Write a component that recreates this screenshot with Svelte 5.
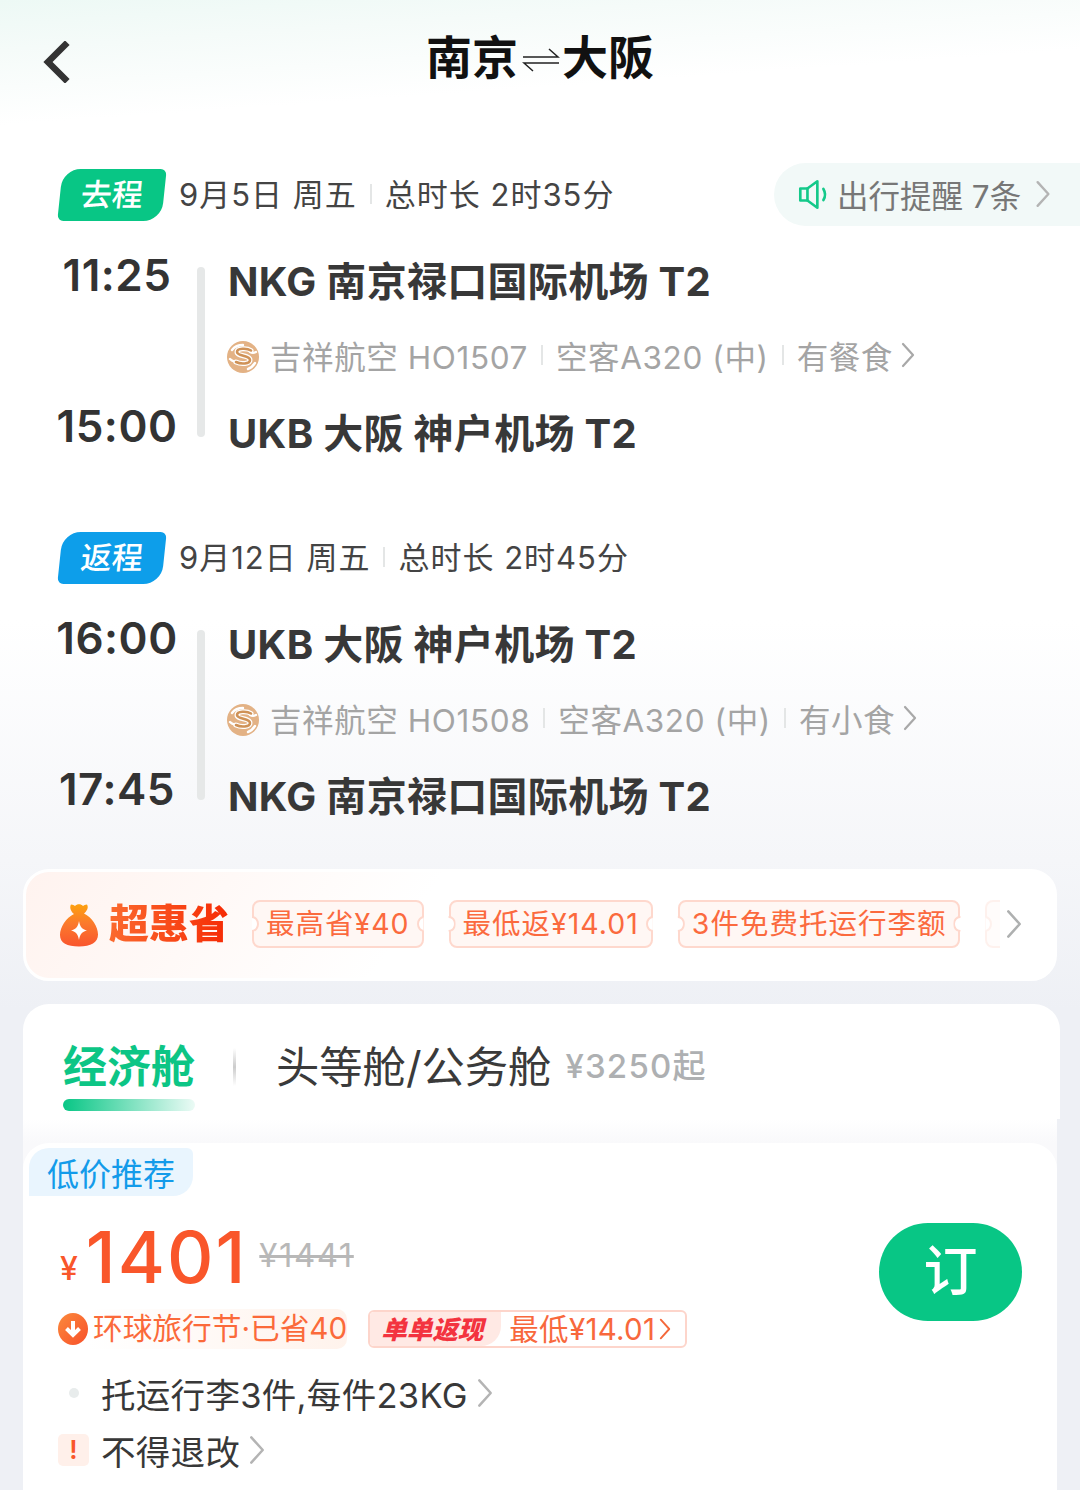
<script lang="ts">
	const legs = [
		{
			tag: '去程', tone: 'green', date: '9月5日 周五', total: '总时长 2时35分', reminder: true,
			depTime: '11:25', arrTime: '15:00',
			dep: 'NKG 南京禄口国际机场 T2', arr: 'UKB 大阪 神户机场 T2',
			flight: '吉祥航空 HO1507', plane: '空客A320 (中)', meal: '有餐食'
		},
		{
			tag: '返程', tone: 'blue', date: '9月12日 周五', total: '总时长 2时45分', reminder: false,
			depTime: '16:00', arrTime: '17:45',
			dep: 'UKB 大阪 神户机场 T2', arr: 'NKG 南京禄口国际机场 T2',
			flight: '吉祥航空 HO1508', plane: '空客A320 (中)', meal: '有小食'
		}
	];

	const perks = ['最高省¥40', '最低返¥14.01', '3件免费托运行李额'];
</script>

{#snippet chevron(w: number, h: number, color: string)}
	<svg class="chev" width={w} height={h} viewBox="0 0 14 26" fill="none">
		<path d="M2 2l10 11L2 24" stroke={color} stroke-width="2.2" stroke-linecap="round" stroke-linejoin="round" />
	</svg>
{/snippet}

<div class="page">
	<header class="nav">
		<svg class="back" width="28" height="42" viewBox="0 0 28 42" fill="none">
			<path d="M23 4L6 21l17 17" stroke="#333" stroke-width="6.500" stroke-linecap="square" />
		</svg>
		<h1 class="title">
			南京
			<svg width="38" height="24" viewBox="0 0 38 24" fill="none">
				<path d="M1 9h35L27 1M37 15H2l9 8" stroke="#222" stroke-width="1.5" />
			</svg>
			大阪
		</h1>
	</header>

	{#each legs as leg}
		<section class="leg">
			<div class="leg-head">
				<span class="tag {leg.tone}">{leg.tag}</span>
				<span class="date">{leg.date}</span>
				<i class="tick"></i>
				<span class="date">{leg.total}</span>
				{#if leg.reminder}
					<div class="reminder">
						<svg width="33" height="33" viewBox="0 0 30 30" fill="none">
							<path d="M3 9.5h6.5L18.5 3v24l-9-6.500H3z" stroke="#14c98a" stroke-width="2.400" stroke-linejoin="round" />
							<path d="M9.500 9.500v11M24 10c1.800 3 1.800 7 0 10" stroke="#14c98a" stroke-width="2.400" stroke-linecap="round" />
						</svg>
						<span>出行提醒 7条</span>
						{@render chevron(16, 28, '#b4b4b4')}
					</div>
				{/if}
			</div>

			<div class="leg-body">
				<div class="times">
					<span>{leg.depTime}</span>
					<span>{leg.arrTime}</span>
				</div>
				<i class="rail"></i>
				<div class="route">
					<div class="airport">{leg.dep}</div>
					<div class="flight">
						<svg class="logo" width="34" height="34" viewBox="0 0 34 34">
							<circle cx="17" cy="17" r="16" fill="#e3b285" />
							<path d="M6 10c3-4 7-5 11-5M22 29c3-1 5-3 7-6M4 19c2 2 3 2 6 3M24 12c2 1 4 1 6 0" fill="none" stroke="#fff" stroke-width="2.400" stroke-linecap="round" />
							<path d="M25 10.500c-4-2.500-14-2.500-14 1.500 0 4.500 13 3 13 8 0 4-9 4.500-14 2" fill="none" stroke="#fff" stroke-width="5" stroke-linecap="round" />
							<path d="M25 10.500c-4-2.500-14-2.500-14 1.500 0 4.500 13 3 13 8 0 4-9 4.500-14 2" fill="none" stroke="#cf9257" stroke-width="2.600" stroke-linecap="round" />
						</svg>
						<span>{leg.flight}</span>
						<i class="tick"></i>
						<span>{leg.plane}</span>
						<i class="tick"></i>
						<span>{leg.meal}</span>
						{@render chevron(14, 26, '#a8a8a8')}
					</div>
					<div class="airport">{leg.arr}</div>
				</div>
			</div>
		</section>
	{/each}

	<section class="deals">
		<svg class="bag" width="38" height="44" viewBox="0 0 38 44">
			<defs>
				<linearGradient id="bagFill" x1="0.500" y1="0" x2="0.500" y2="1">
					<stop offset="0" stop-color="#fda20e" />
					<stop offset="0.450" stop-color="#fb7a2c" />
					<stop offset="1" stop-color="#f9552e" />
				</linearGradient>
			</defs>
			<path d="M11 1.500c2 0 3 1 4 1.500 2-2.500 6-2.500 8 0 1-.5 2-1.500 4-1.500 2 3-.5 7-3 9 8 4 14 13 14 21 0 8-7 12-19 12S0 40 0 32c0-8 6-17 14-21-2.500-2-5-6-3-9.500z" fill="url(#bagFill)" />
			<path d="M19 18c1 6 3 8 8 9.500-5 1.500-7 3.500-8 9.500-1-6-3-8-8-9.500 5-1.500 7-3.500 8-9.500z" fill="#fff" />
		</svg>
		<span class="brand">超惠省</span>
		<div class="perks">
			{#each perks as perk}
				<span class="ticket">{perk}</span>
			{/each}
			<span class="ticket ghost"></span>
		</div>
		{@render chevron(16, 30, '#aeb0b0')}
	</section>

	<section class="cabin-tabs">
		<div class="tab-on">
			<span>经济舱</span>
			<i class="tab-line"></i>
		</div>
		<i class="tab-sep"></i>
		<span class="tab-off">头等舱/公务舱</span>
		<span class="tab-price">¥3250起</span>
	</section>

	<section class="fare-wrap">
		<div class="fare">
			<span class="low-tag">低价推荐</span>
			<div class="fare-main">
				<div class="fare-info">
					<div class="price-row">
						<span class="yen">¥</span>
						<span class="price">1401</span>
						<s class="old-price">¥1441</s>
					</div>
					<div class="promo-row">
						<span class="festival">
							<svg width="30" height="32" viewBox="0 0 30 32">
								<defs>
									<linearGradient id="dropFill" x1="0" y1="0" x2="1" y2="1">
										<stop offset="0" stop-color="#fb8a3c" />
										<stop offset="1" stop-color="#f8502a" />
									</linearGradient>
								</defs>
								<ellipse cx="15" cy="16" rx="15" ry="16" fill="url(#dropFill)" />
								<path d="M15 8v14M8.500 15.500L15 22l6.500-6.500" fill="none" stroke="#fff" stroke-width="4" />
							</svg>
							<span class="festival-text">环球旅行节·已省40</span>
						</span>
						<span class="cashback">
							<b>单单返现</b>
							<span class="cash-text">最低¥14.01</span>
							{@render chevron(12, 22, '#f4683a')}
						</span>
					</div>
				</div>
				<button type="button" class="book">订</button>
			</div>
			<div class="note">
				<span class="note-icon"><i class="dot"></i></span>
				<span>托运行李3件,每件23KG</span>
				{@render chevron(16, 30, '#b4b4b4')}
			</div>
			<div class="note">
				<span class="note-icon warn">!</span>
				<span>不得退改</span>
				{@render chevron(16, 30, '#b4b4b4')}
			</div>
		</div>
	</section>
</div>

<style>
	:global(body) {
		margin: 0;
	}

	.page {
		height: 1490px;
		overflow: hidden;
		box-sizing: border-box;
		font-family: Inter, "Noto Sans CJK SC", sans-serif;
		color: #333;
		background:
			linear-gradient(176deg, #edf9f5 0, #f5fbf9 50px, rgba(255, 255, 255, 0) 125px),
			linear-gradient(180deg, #fff 0, #fff 620px, #f5f6f9 860px, #eef0f5 1010px, #eef0f5 100%);
	}

	.chev {
		flex: none;
	}

	.tick {
		flex: none;
		width: 2px;
		height: 20px;
		background: #e4e6e6;
	}

	.nav {
		display: flex;
		align-items: center;
		justify-content: center;
		position: relative;
		height: 117px;
	}

	.back {
		position: absolute;
		left: 42px;
		top: 41px;
	}

	.title {
		display: flex;
		align-items: center;
		margin: -4px 0 0;
		font-size: 46px;
		font-weight: 700;
		color: #111;
		line-height: 1;
	}

	.title svg {
		margin: 6px 2px 0 4px;
	}

	.leg {
		padding-left: 58px;
		height: 363px;
	}

	.leg + .leg {
		height: 344px;
	}

	.leg-head {
		display: flex;
		align-items: center;
		gap: 13px;
		height: 64px;
		margin-top: 45px;
	}

	.leg + .leg .leg-head {
		margin-top: 0;
	}

	.tag {
		flex: none;
		width: 104px;
		height: 52px;
		box-sizing: border-box;
		padding-bottom: 6px;
		margin: 2px 2px 0 2px;
		display: flex;
		align-items: center;
		justify-content: center;
		font-size: 31px;
		font-weight: 500;
		color: #fff;
		border-radius: 18px 6px 18px 6px;
		transform: skewX(-6deg);
	}

	.tag.green {
		background: #08c685;
	}

	.tag.blue {
		background: #0d9eea;
	}

	.date {
		margin-bottom: 3px;
		font-size: 31px;
		color: #444;
		letter-spacing: 1px;
		white-space: nowrap;
	}

	.reminder {
		display: flex;
		align-items: center;
		gap: 7px;
		margin-left: auto;
		height: 63px;
		width: 306px;
		box-sizing: border-box;
		padding-left: 23px;
		background: #f2f9f8;
		border-radius: 32px 0 0 32px;
		font-size: 31.500px;
		color: #777;
		white-space: nowrap;
	}

	.reminder .chev {
		margin-left: 7px;
	}

	.leg-body {
		display: flex;
		margin-top: 20px;
	}

	.times {
		width: 118px;
		height: 204px;
		margin-top: 3px;
		display: flex;
		flex-direction: column;
		justify-content: space-between;
		align-items: center;
		font-size: 44px;
		font-weight: 600;
		line-height: 53px;
		color: #333;
		letter-spacing: 0.5px;
	}

	.rail {
		width: 8px;
		height: 170px;
		margin: 21px 0 0 21px;
		border-radius: 4px;
		background: #e6e8e8;
	}

	.route {
		margin: 7px 0 0 23px;
		display: flex;
		flex-direction: column;
	}

	.airport {
		font-size: 40px;
		font-weight: 700;
		line-height: 58px;
		color: #383838;
		letter-spacing: 0.3px;
		white-space: nowrap;
	}

	.flight {
		display: flex;
		align-items: center;
		gap: 13px;
		height: 88px;
		padding-bottom: 6px;
		font-size: 31.500px;
		color: #a4a4a4;
		white-space: nowrap;
		letter-spacing: 0.6px;
	}

	.flight .logo {
		margin: 4px -3px 0 -2px;
	}

	.flight .chev {
		margin-left: -5px;
	}

	.deals {
		display: flex;
		align-items: center;
		width: 1034px;
		height: 112px;
		box-sizing: border-box;
		margin: 0 0 23px 23px;
		padding: 0 32px 3px 34px;
		background: linear-gradient(125deg, #fff3ef 0, #fff 38%, #fff 100%);
		border: 3px solid #fff;
		border-radius: 26px;
	}

	.bag {
		flex: none;
		margin-top: 2px;
	}

	.brand {
		flex: none;
		margin: 0 23px 0 11px;
		font-size: 40px;
		font-weight: 900;
		line-height: 50px;
		background: linear-gradient(90deg, #fb6a2e, #f62b05);
		-webkit-background-clip: text;
		background-clip: text;
		color: transparent;
	}

	.perks {
		display: flex;
		gap: 25px;
		flex: 1;
		min-width: 0;
		overflow: hidden;
	}

	.ticket {
		position: relative;
		flex: none;
		height: 48px;
		box-sizing: border-box;
		padding: 0 12px 5px;
		display: flex;
		align-items: center;
		font-size: 28.500px;
		letter-spacing: 1px;
		color: #fb6a3e;
		background: #fff7f4;
		border: 2px solid #fed8cd;
		border-radius: 8px;
		white-space: nowrap;
	}

	.ticket::before,
	.ticket::after {
		content: "";
		position: absolute;
		top: 50%;
		width: 10px;
		height: 12px;
		margin-top: -8px;
		background: #fff;
		border: 2px solid #fed8cd;
		border-radius: 50%;
	}

	.ticket::before {
		left: -9px;
		clip-path: inset(0 0 0 50%);
	}

	.ticket::after {
		right: -9px;
		clip-path: inset(0 50% 0 0);
	}

	.ticket.ghost {
		width: 30px;
		padding: 0;
		opacity: 0.35;
		border-right-color: transparent;
		border-radius: 8px 0 0 8px;
	}

	.ticket.ghost::after {
		display: none;
	}

	.deals .chev {
		margin-left: 6px;
	}

	.cabin-tabs {
		display: flex;
		align-items: flex-start;
		width: 1037px;
		height: 115px;
		margin-left: 23px;
		background: #fff;
		border-radius: 26px 26px 0 0;
	}

	.tab-on {
		display: flex;
		flex-direction: column;
		margin: 36px 0 0 40px;
		font-size: 44px;
		font-weight: 700;
		line-height: 54px;
		color: #0cc585;
	}

	.tab-line {
		display: block;
		width: 132px;
		height: 12px;
		margin-top: 5px;
		border-radius: 6px;
		background: linear-gradient(90deg, #08c685, rgba(8, 198, 133, 0.08));
	}

	.tab-sep {
		width: 3px;
		height: 38px;
		margin: 44px 0 0 38px;
		background: linear-gradient(180deg, #fff, #ccc 50%, #fff);
	}

	.tab-off {
		margin: 36px 0 0 40px;
		font-size: 43.300px;
		line-height: 54px;
		color: #3a3a3a;
		white-space: nowrap;
	}

	.tab-price {
		margin: 40px 0 0 14px;
		font-size: 33px;
		line-height: 44px;
		letter-spacing: 1.2px;
		font-weight: 500;
		color: #aeb0b2;
	}

	.fare-wrap {
		width: 1034px;
		margin-left: 23px;
		padding-top: 24px;
		background: linear-gradient(180deg, #fff 0, #f9f9fb 24px);
	}

	.fare {
		height: 348px;
		box-sizing: border-box;
		padding: 5px 0 0 6px;
		background: #fff;
		border-radius: 26px 26px 0 0;
	}

	.low-tag {
		display: inline-flex;
		align-items: center;
		justify-content: center;
		width: 164px;
		height: 48px;
		font-size: 32px;
		color: #139bea;
		background: #e9f5fe;
		border-radius: 20px 6px 20px 0;
	}

	.fare-main {
		display: flex;
		justify-content: space-between;
		height: 141px;
		margin-top: 27px;
		padding: 0 35px 0 31px;
	}

	.price-row {
		display: flex;
		align-items: baseline;
		height: 82px;
		margin-top: -1px;
		margin-bottom: 1px;
		color: #f9562a;
	}

	.yen {
		font-size: 32px;
		font-weight: 500;
		margin-right: 8px;
		position: relative;
		top: -3px;
	}

	.price {
		font-size: 72px;
		font-weight: 500;
		line-height: 70px;
		letter-spacing: 2px;
	}

	.old-price {
		margin-left: 12px;
		font-size: 33px;
		color: #b8b8b8;
		letter-spacing: 1.500px;
		position: relative;
		top: -16px;
	}

	.promo-row {
		display: flex;
		align-items: center;
		gap: 21px;
		margin: 5px 0 0 -2px;
	}

	.festival {
		display: flex;
		align-items: center;
		gap: 5px;
		height: 40px;
		font-size: 29.700px;
		color: #fb6a3a;
		white-space: nowrap;
		border-radius: 0 10px 10px 0;
		background: linear-gradient(90deg, rgba(255, 255, 255, 0) 30px, #fff3ec 100%);
	}

	.festival-text,
	.cash-text {
		margin-bottom: 5px;
	}

	.cashback {
		display: flex;
		align-items: center;
		width: 319px;
		height: 38px;
		box-sizing: border-box;
		border: 2px solid #fdd5cb;
		border-radius: 6px;
		white-space: nowrap;
	}

	.cashback b {
		display: flex;
		align-items: center;
		width: 131px;
		height: 100%;
		box-sizing: border-box;
		padding: 0 0 4px 11px;
		flex: none;
		font-size: 25.500px;
		font-weight: 900;
		font-style: italic;
		color: #f3333f;
		background: #ffe9e4;
		border-radius: 4px 20px 20px 4px / 4px 0 20px 4px;
	}

	.cash-text {
		margin-left: 8px;
		font-size: 29.500px;
		letter-spacing: 0.3px;
		color: #f8683c;
	}

	.cashback .chev {
		margin-left: 4px;
	}

	.book {
		align-self: flex-start;
		flex: none;
		width: 143px;
		height: 98px;
		padding: 0;
		border: 0;
		border-radius: 49px;
		background: #08c685;
		color: #fff;
		font-family: inherit;
		font-size: 54px;
		font-weight: 500;
		line-height: 1;
	}

	.note {
		display: flex;
		align-items: center;
		height: 57px;
		margin-left: 29px;
		font-size: 34.500px;
		letter-spacing: 0.3px;
		color: #383838;
		white-space: nowrap;
	}

	.note .chev {
		margin-left: 9px;
	}

	.note-icon {
		flex: none;
		display: flex;
		align-items: center;
		justify-content: center;
		width: 31px;
		height: 32px;
		margin-right: 12px;
		border-radius: 5px;
	}

	.note-icon.warn {
		background: #fff0ea;
		color: #f9562a;
		font-size: 26px;
		font-weight: 600;
	}

	.dot {
		width: 10px;
		height: 10px;
		border-radius: 50%;
		background: #e8ecec;
	}
</style>
